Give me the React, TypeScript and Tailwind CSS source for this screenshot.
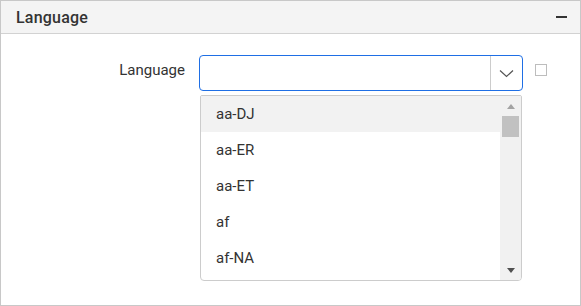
import React from "react";

const items = ["aa-DJ", "aa-ER", "aa-ET", "af", "af-NA"];

export default function App() {
  return (
    <div
      className="w-[581px] h-[306px] bg-white border border-[#c8c8c8] flex flex-col text-[#333333]"
      style={{ fontFamily: "Roboto, 'Liberation Sans', sans-serif" }}
    >
      <div className="h-[33px] shrink-0 bg-[#f4f4f4] border-b border-[#d2d2d2] flex items-center justify-between pl-[15px] pr-[13px]">
        <span className="text-[16px] font-medium leading-none tracking-[0.2px] pt-[2px]">Language</span>
        <div className="w-[11px] h-[1.5px] bg-[#333333]" />
      </div>
      <div className="flex pt-[21px]">
        <div className="w-[184px] h-[36px] flex items-center justify-end text-[15px] pb-[6px]">
          Language
        </div>
        <div className="ml-[14px] relative w-[324px]">
          <div className="h-[36px] border border-[#1f6fe5] rounded-[4px] flex">
            <div className="flex-1" />
            <div className="w-[32px] border-l border-[#cccccc] flex items-center justify-center pr-[1px]">
              <svg width="15" height="9" viewBox="0 0 15 9" fill="none">
                <path d="M1 1.5 L7.5 7.5 L14 1.5" stroke="#555555" strokeWidth="1.2" />
              </svg>
            </div>
          </div>
          <div className="absolute left-[1px] top-[40px] w-[322px] h-[186px] border border-[#cccccc] rounded-b-[4px] rounded-t-[2px] bg-white flex overflow-hidden">
            <div className="flex-1 flex flex-col">
              {items.map((it, i) => (
                <div
                  key={it}
                  className={
                    "h-[36px] shrink-0 flex items-center pl-[15px] text-[15px] " +
                    (i === 0 ? "bg-[#f2f2f2]" : "bg-white")
                  }
                >
                  {it}
                </div>
              ))}
            </div>
            <div className="w-[21px] bg-[#f1f1f1] flex flex-col items-center">
              <div className="h-[20px] flex items-center justify-center">
                <div className="w-0 h-0 border-l-[4.5px] border-r-[4.5px] border-b-[5px] border-l-transparent border-r-transparent border-b-[#a3a3a3]" />
              </div>
              <div className="w-[17px] h-[21px] bg-[#c1c1c1]" />
              <div className="flex-1" />
              <div className="h-[19px] flex items-start justify-center pt-[7px]">
                <div className="w-0 h-0 border-l-[4.5px] border-r-[4.5px] border-t-[5px] border-l-transparent border-r-transparent border-t-[#505050]" />
              </div>
            </div>
          </div>
        </div>
        <div className="ml-[12px] mt-[9px] w-[12px] h-[12px] border border-[#bdbdbd] bg-white" />
      </div>
    </div>
  );
}
